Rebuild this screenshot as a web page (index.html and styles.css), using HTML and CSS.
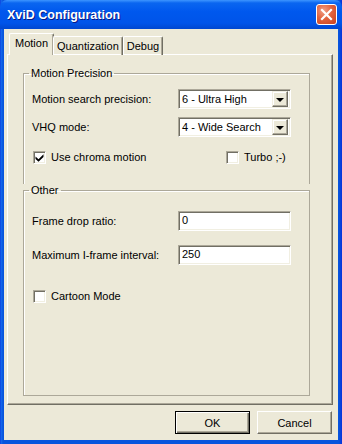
FILE: index.html
```html
<!DOCTYPE html>
<html>
<head>
	<meta charset="UTF-8">
<link rel="stylesheet" href="styles.css">
</head>
<body>
<div class="window">
	<div class="titlebar">
		<span class="title">XviD Configuration</span>
		<span class="close">
			<svg width="13" height="13" viewBox="0 0 13 13"><path d="M2 2L11 11M11 2L2 11" stroke="#fff" stroke-width="2.2" stroke-linecap="square"/></svg>
		</span>
	</div>
	<div class="client">
		<div class="tabs">
			<span class="tab active">Motion</span>
			<span class="tab">Quantization</span>
			<span class="tab">Debug</span>
		</div>
		<div class="panel">
			<fieldset class="group first">
				<legend>Motion Precision</legend>
				<div class="row">
					<label>Motion search precision:</label>
					<div class="combo"><span class="val">6 - Ultra High</span><span class="drop"></span></div>
				</div>
				<div class="row">
					<label>VHQ mode:</label>
					<div class="combo"><span class="val">4 - Wide Search</span><span class="drop"></span></div>
				</div>
				<div class="checks">
					<span class="check wide"><span class="box on"><svg width="9" height="9" viewBox="0 0 9 9"><path d="M0.5 3.5L3.5 6.2L8.5 1.2V4L3.5 8.8L0.5 6Z" fill="#000"/></svg></span>Use chroma motion</span>
					<span class="check"><span class="box"></span>Turbo ;-)</span>
				</div>
			</fieldset>
			<fieldset class="group second">
				<legend>Other</legend>
				<div class="row edit">
					<label>Frame drop ratio:</label>
					<div class="field">0</div>
				</div>
				<div class="row edit">
					<label>Maximum I-frame interval:</label>
					<div class="field">250</div>
				</div>
				<div class="checks cartoon">
					<span class="check"><span class="box"></span>Cartoon Mode</span>
				</div>
			</fieldset>
		</div>
		<div class="buttons">
			<span class="btn default">OK</span>
			<span class="btn">Cancel</span>
		</div>
	</div>
</div>
</body>
</html>
```

FILE: styles.css
```css
body{margin:0;background:#fff;font-family:"Liberation Sans",Arial,sans-serif;font-size:11px;color:#000;}
.window{width:342px;height:444px;display:flex;flex-direction:column;background:linear-gradient(90deg,#0831D9 0,#166AEE 1px,#0855DD 3px,#0855DD 339px,#0831D9 342px);}
.titlebar{flex:none;height:29px;box-sizing:border-box;display:flex;align-items:center;justify-content:space-between;padding:0 5px 0 7px;background:linear-gradient(#3D95FF 0,#0A66F0 3px,#0058EE 40%,#0054E9 80%,#0047D0 100%);border-radius:7px 7px 0 0;}
.title{color:#fff;font-weight:bold;font-size:12.5px;text-shadow:1px 1px 0 #0A1883;}
.close{width:19px;height:19px;border:1px solid #fff;border-radius:3px;display:flex;align-items:center;justify-content:center;background:radial-gradient(circle at 35% 30%,#F0A088 0,#E2633E 45%,#C8401C 100%);}
.client{flex:1;min-height:0;margin:0 4px 4px 4px;background:#ECE9D8;display:flex;flex-direction:column;padding:5px 5px 0 3px;}
.tabs{flex:none;display:flex;align-items:flex-end;height:21px;padding-left:2px;position:relative;z-index:1;margin-bottom:-1px;}
.tab{height:18px;line-height:18px;padding:0 3px;border:1px solid #fff;border-right:1px solid #716F64;border-bottom:none;box-shadow:inset -1px 0 0 #ACA899;border-radius:2px 2px 0 0;}
.tab.active{height:21px;line-height:19px;padding:0 5px;background:#ECE9D8;margin-right:-1px;}
.panel{flex:none;height:351px;box-sizing:border-box;border:1px solid #fff;border-right-color:#716F64;border-bottom-color:#716F64;box-shadow:inset -1px -1px 0 #ACA899;padding:12px 0 0 15px;}
.group{width:287px;margin:0;padding:0;border:1px solid #ACA899;box-shadow:inset 1px 1px 0 #fff;}
.group legend{margin-left:5px;padding:0 2px;line-height:13px;}
.group.first{border-bottom:none;padding-top:9px;height:117px;box-sizing:border-box;}
.group.second{border-top:1px solid #ACA899;padding-top:14px;height:212px;box-sizing:border-box;}
.row{display:flex;align-items:center;height:20px;padding-left:8px;margin-bottom:8px;}
.row label{width:146px;}
.row.edit{margin-bottom:14px;}
.combo{width:113px;height:20px;box-sizing:border-box;display:flex;align-items:center;background:#fff;border:1px solid #ACA899;border-right-color:#fff;border-bottom-color:#fff;box-shadow:inset 1px 1px 0 #716F64,inset -1px -1px 0 #F1EFE2;padding:2px;}
.combo .val{flex:1;padding-left:1px;}
.drop{width:16px;height:16px;box-sizing:border-box;background:#ECE9D8;border:1px solid #F1EFE2;border-right-color:#716F64;border-bottom-color:#716F64;box-shadow:inset -1px -1px 0 #ACA899,inset 1px 1px 0 #fff;display:flex;align-items:center;justify-content:center;}
.drop::after{content:"";border-left:4px solid transparent;border-right:4px solid transparent;border-top:4px solid #000;margin-top:1px;}
.field{width:113px;height:20px;box-sizing:border-box;line-height:16px;background:#fff;border:1px solid #ACA899;border-right-color:#fff;border-bottom-color:#fff;box-shadow:inset 1px 1px 0 #716F64,inset -1px -1px 0 #F1EFE2;padding:0 3px;}
.checks{display:flex;align-items:center;height:16px;padding-left:9px;margin-top:12px;}
.check{display:flex;align-items:center;}
.check.wide{width:193px;}
.box{width:13px;height:13px;box-sizing:border-box;margin-right:5px;background:#fff;border:1px solid #ACA899;border-right-color:#fff;border-bottom-color:#fff;box-shadow:inset 1px 1px 0 #716F64,inset -1px -1px 0 #F1EFE2;display:flex;align-items:center;justify-content:center;}
.cartoon{margin-top:23px;}
.buttons{display:flex;justify-content:flex-end;gap:7px;padding:6px 1px 0 0;}
.btn{width:75px;height:23px;box-sizing:border-box;display:flex;align-items:center;justify-content:center;border:1px solid #fff;border-right-color:#716F64;border-bottom-color:#716F64;box-shadow:inset -1px -1px 0 #ACA899;}
.btn.default{border:1px solid #000;box-shadow:inset 1px 1px 0 #fff,inset -1px -1px 0 #716F64,inset -2px -2px 0 #ACA899;}
```
